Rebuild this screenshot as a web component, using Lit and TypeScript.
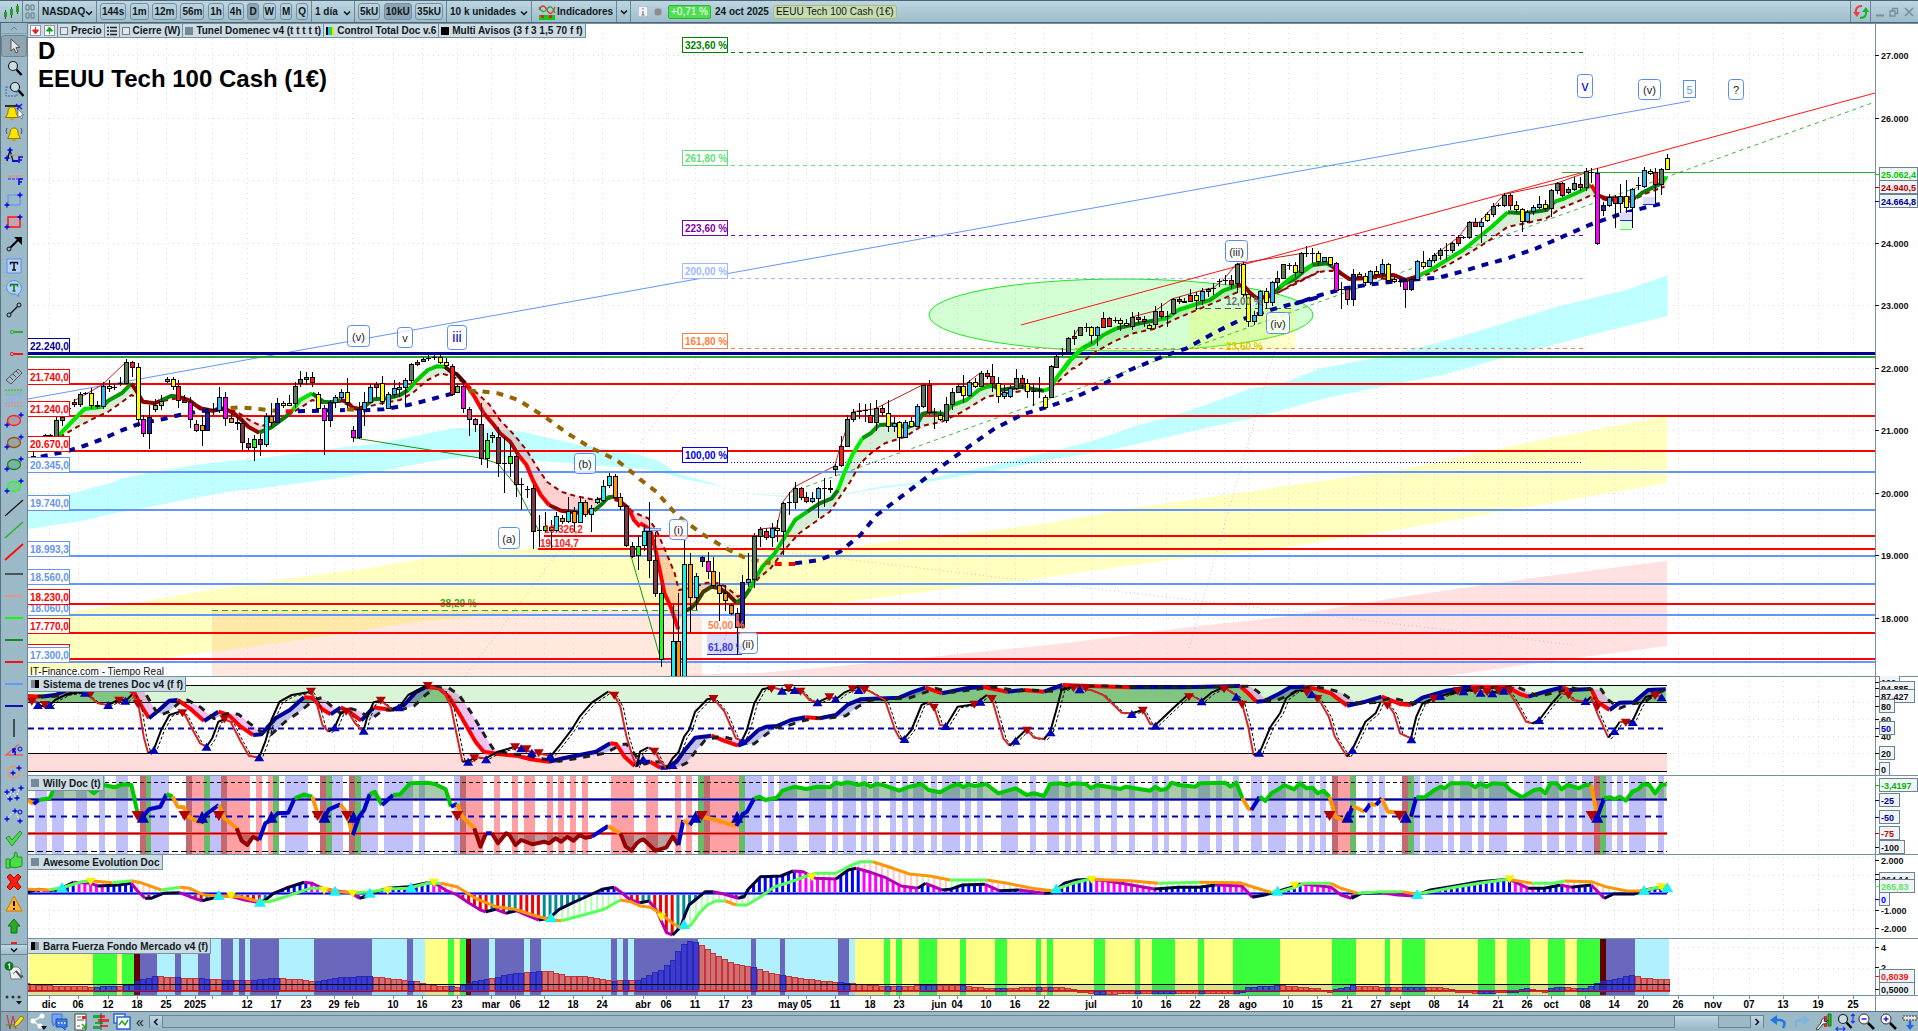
import { LitElement, html, svg, css } from "lit";
import { customElement } from "lit/decorators.js";

type P = [number, number];
type Block = { x: number; y: number; kx: number; ky: number };

/* Series are stored in block-local fixed-point units; a block gives origin and resolution. */
const A: Block = { x: 0, y: 340, kx: 2.45, ky: 3 };
const B: Block = { x: 640, y: 340, kx: 2.45, ky: 3 };
const C: Block = { x: 880, y: 220, kx: 3, ky: 3 };
const D: Block = { x: 1280, y: 60, kx: 2.458, ky: 3 };
const E: Block = { x: 0, y: 670, kx: 2.45, ky: 3 };
const F: Block = { x: 640, y: 670, kx: 2.45, ky: 3 };
const G: Block = { x: 1280, y: 670, kx: 2.458, ky: 3 };

const at = (b: Block, s: string): P[] =>
  s.trim().split(/\s+/).map((t) => {
    const [x, y] = t.split(",").map(Number);
    return [b.x + x / b.kx, b.y + y / b.ky] as P;
  });
const join = (...parts: [Block, string][]): P[] => parts.flatMap(([b, s]) => at(b, s));
const str = (p: P[]) => p.map(([x, y]) => `${x.toFixed(1)},${y.toFixed(1)}`).join(" ");
const barX = (i: number) => 33 + 5.815 * i;
const LAST = 1667;

function valueAt(curve: P[], x: number): number {
  if (x <= curve[0][0]) return curve[0][1];
  for (let i = 1; i < curve.length; i++) {
    if (x <= curve[i][0]) {
      const [x0, y0] = curve[i - 1];
      const [x1, y1] = curve[i];
      return x1 === x0 ? y1 : y0 + ((y1 - y0) * (x - x0)) / (x1 - x0);
    }
  }
  return curve[curve.length - 1][1];
}

const BODY: Record<string, string> = {
  G: "#5b7a5b", r: "#ff1a1a", y: "#ffff00", m: "#ff00ff", N: "#1f1fb0", b: "#2fb8f5",
  c: "#19f0f5", o: "#ff960a", l: "#1eff1e", h: "#7fc04a", w: "#7d3a46", p: "#d04a90", k: "#000",
};

/* colour, high, open/close top, open/close bottom, low */
const CANDLES: [Block, number, string][] = [
  [A, 0, `k 337 349 349 349;-;k 283 286 286 290;k 282 286 286 290;G 232 240 289 289;G 230 232 241 258;k 195 205 205 212;r 178 186 193 200;G 157 163 191 200;k 155 160 160 165;y 145 160 194 207;y 182 194 199 206;b 125 137 199 207;y 120 137 143 155;k 130 140 140 150;k 112 128 128 138;G 58 67 128 130;r 63 67 82 110;y 70 82 238 262;m 225 238 280 290;N 195 230 280 327;h 178 194 207 215;h 165 182 194 210;b 110 118 124 130;y 112 118 138 150;r 120 138 181 205;r 165 181 187 190;m 172 187 238 265;p 240 253 270 277;o 225 254 271 317;N 205 216 271 273;k 190 206 212 225;b 140 172 211 218;m 155 172 234 258;o 222 235 246 250;p 232 246 250 270;w 235 250 307 330;w 295 310 322 330;l 285 296 322 362;w 283 296 313 347;c 220 229 313 320;o 190 229 247 260;N 175 190 247 250;y 182 188 195 203;y 165 188 195 198;G 125 137 188 203;G 93 118 130 142;G 97 112 118 135;r 96 112 127 140;y 155 161 205 210;m 195 205 241 344;N 180 187 241 262;b 165 172 187 205;b 148 157 172 180;y 115 157 187 205;m 258 270 291 305;N 185 207 291 297;b 155 187 207 258;b 132 142 187 190;r 125 132 142 175;y 108 130 184 195;b 155 163 205 208;b 120 145 163 175;b 125 142 148 170;b 115 121 142 197;G 68 73 121 130;r 60 65 72 78;G 50 58 62 66;k 45 55 55 62;k 45 52 52 60;y 45 52 67 72;y 55 67 75 80;r 72 77 163 168;h 130 139 155 160;m 130 139 205 218;p 200 206 238 288;p 235 238 253 275;w 190 253 355 375;l 280 300 355 385;l 275 286 292 310;w 260 292 370 412;k 290 370 370 458;l 310 349 370 410;w 345 349 432 470;k 415 432 432 510;k 437 446 446 475;w 436 445 574 628;k 525 570 572 620;l 515 559 571 575;l 540 560 571 625;c 515 529 571 575;o 525 533 544 552;c 470 513 543 550;o 500 514 547 575;c 475 487 547 550;o 480 487 523 530;c 495 503 523 575;c 472 478 486 492;c 420 437 480 485;c 400 409 436 443;o 403 409 472 475;o 460 472 498 510;w 495 499 615 620;w 605 617 647 655;l 585 617 645 690`],
  [B, 105, `c 555 573 616 632;w 487 573 660 715;w 575 660 760 770;l 735 760 957 980;-;c 795 903 1040 1040;o 760 903 1040 1040;c 600 673 1040 1040;o 640 673 772 878;c 700 708 772 810;N 647 651 664 680;m 635 664 692 717;o 650 692 735 745;o 695 735 760 842;o 735 760 781 812;o 790 795 819 825;p 805 819 862 945;N 705 727 862 862;b 640 716 727 740;G 580 589 716 745;G 560 567 589 622;r 565 573 592 600;b 550 564 592 620;y 540 563 571 605;G 485 488 572 645;k 455 486 486 525;G 427 443 485 508;r 440 445 470 480;r 455 470 482 490;b 455 475 482 490;b 440 445 475 535;k 415 443 443 500;y 420 443 448 460;G 372 378 388 408;r 288 319 376 380;G 225 236 319 322;G 208 217 236 245;k 190 212 212 238;k 192 211 211 245;r 190 225 247 250;G 180 205 247 273;r 195 205 217 230;y 180 218 257 275;b 230 248 257 275;y 242 247 292 330;b 240 245 291 295;y 230 243 257 262;b 192 199 257 260;G 128 135 199 205;r 120 135 217 225;k 205 217 223 268;y 210 225 238 242;G 170 193 239 250;G 145 155 193 210;G 130 139 155 160;y 105 139 166 190;b 120 127 166 170;y 115 125 139 143;G 93 100 139 142;r 90 100 107 118;r 72 107 128 155;y 110 128 169 188;b 135 155 169 178;b 135 145 168 175;G 87 115 145 150;r 105 115 130 148;y 118 130 152 175;k 130 152 152 198;k 110 150 150 175;y 165 170 202 205;G 75 79 170 175`],
  [C, 176, `G 405 408 440 445;k 385 395 398 408;G 352 355 395 398;r 330 348 355 375;G 320 322 344 346;k 310 322 322 335;y 318 322 346 372;b 317 322 346 377;r 277 295 322 325;r 290 295 317 322;k 292 301 301 310;y 295 300 310 333;y 298 310 316 320;G 277 291 317 330;r 275 290 297 313;r 288 297 303 320;y 313 314 325 328;G 257 273 313 328;r 250 273 287 298;k 273 287 287 320;G 233 236 280 285;r 230 236 243 252;r 235 242 245 250;r 207 226 242 247;y 217 226 241 270;b 205 214 241 255;G 203 206 214 232;k 190 205 205 225;k 178 182 182 200;k 165 180 182 195;r 165 180 191 206;G 130 132 190 220;y 122 132 223 230;y 222 223 304 320;b 272 285 303 315;b 210 214 285 287;y 203 214 247 268;b 182 187 247 257;G 152 173 187 205;G 131 133 173 176;k 130 135 135 150;y 127 136 155 170;G 95 100 155 163;k 77 100 100 110;k 85 100 100 130;y 93 100 122 138`],
  [D, 222, `b 590 592 602 605;y 592 592 612 620;m 605 610 689 690;k 665 688 688 746;p 685 688 716 735;N 628 643 716 738;y 637 641 648 652;y 640 648 666 677;b 630 633 665 675;y 618 633 641 652;b 598 612 640 658;y 608 612 661 668;y 650 658 664 670;k 650 662 665 680;m 655 664 686 743;N 650 656 686 692;b 600 604 658 660;y 573 605 617 628;b 593 601 617 622;G 578 586 601 610;G 565 570 586 600;k 548 571 571 600;G 545 550 571 580;r 525 531 550 558;k 528 532 532 538;G 483 487 532 538;r 475 487 499 502;b 475 487 499 550;y 455 463 479 487;G 430 437 463 470;k 430 436 436 440;G 400 405 436 440;r 400 405 436 450;y 422 436 448 460;y 445 448 482 515;b 450 455 482 490;b 436 441 454 465;b 408 433 441 447;y 420 433 445 452;G 388 391 445 472;G 366 370 391 402;r 366 370 406 412;G 380 386 397 402;G 352 370 386 392;r 352 371 382 392;G 323 334 382 392;k 325 337 337 370;m 325 338 548 555;N 427 436 451 467;b 402 412 436 442;r 405 412 430 503;b 372 409 430 460;y 360 409 442 460;b 385 388 442 503;k 350 376 376 390;b 322 331 377 385;y 328 332 338 345;r 325 336 373 430;G 325 328 373 405;y 283 295 328 330`],
];

const GR = "#00c800", DG = "#0a7a0a", DR = "#930000", RD = "#ff0000";
const FAST: [Block, string, string][] = [
  [A, "#00e400", "145,285 180,240 207,207 251,200"],
  [A, "#009c00", "251,200 265,182 300,158 322,130"],
  [A, DR, "322,130 330,145 350,185 379,190 393,182"],
  [A, DG, "393,182 420,167 443,172"],
  [A, DR, "443,172 465,182 490,205 521,212 550,205 575,222 592,240 610,262 635,278"],
  [A, DG, "635,278 665,262 700,230 715,214"],
  [A, "#00e400", "715,214 735,180 765,160"],
  [A, DG, "765,160 792,185 810,187 834,180"],
  [A, DR, "834,180 850,185 864,203 878,207 892,200"],
  [A, DG, "892,200 915,178 949,175 980,165 1000,150"],
  [A, GR, "1000,150 1020,122 1048,90 1070,79 1090,80"],
  [A, "#500000", "1090,80 1105,95 1119,102 1140,130"],
  [A, RD, "1140,130 1160,165 1185,220"],
  [A, "#b80000", "1185,220 1210,255 1225,280 1250,305 1270,345"],
  [A, RD, "1270,345 1290,375 1305,420 1325,465 1345,495"],
  [A, DR, "1345,495 1375,512 1420,518 1455,512"],
  [A, DG, "1455,512 1475,492 1490,472 1505,470"],
  [A, DR, "1505,470 1525,490 1540,505"],
  [A, RD, "1540,505 1553,540 1568,560"],
  [B, RD, "0,550 15,560 25,570 40,640 60,760 75,800 94,868"],
  [B, "#3c3c00", "106,815 125,805 140,785 155,755 175,740 195,745"],
  [B, "#5a1400", "195,745 215,762 236,788"],
  [B, DG, "236,788 255,772 270,745"],
  [B, GR, "270,745 285,710 300,680 330,640 350,600 380,540 410,515"],
  [B, DG, "410,515 440,490 470,475 485,450"],
  [B, "#00f000", "485,450 500,400 520,345 545,295"],
  [B, "#009c00", "545,295 565,280 585,255"],
  [B, DG, "585,255 620,253 655,262 680,250 692,222 706,217 745,222"],
  [B, GR, "745,222 765,195 800,180 830,150 850,140 865,137"],
  [B, "#0a5a0a", "865,137 885,150 935,140 965,148 990,152"],
  [B, "#00e400", "990,152 1005,145 1020,115 1050,65 1080,30 1110,5"],
  [C, "#00e400", "550,450 575,415 610,382"],
  [C, GR, "610,382 640,370 670,345 710,325"],
  [C, DG, "710,325 780,310 830,300"],
  [C, "#00d400", "830,300 860,295 895,270 950,252"],
  [C, "#00b400", "950,252 990,240 1030,212 1069,198"],
  [C, DR, "1069,198 1090,195 1110,218 1130,235 1165,230 1185,215"],
  [C, DG, "1185,215 1215,190 1240,180 1270,155"],
  [C, GR, "1270,155 1300,133 1320,132"],
  [D, "#00d400", "0,682 20,660 50,635 80,615"],
  [D, DG, "80,615 115,610 130,620"],
  [D, DR, "130,620 150,640 170,657 210,655 240,648 280,645 310,660 335,650"],
  [D, "#00d400", "335,650 370,630 410,600 450,570 480,540 520,500 560,457"],
  [D, DG, "560,457 600,460 655,450 675,425"],
  [D, GR, "675,425 700,415 745,390 765,375"],
  [D, RD, "765,375 780,405"],
  [D, DR, "780,405 800,415 850,415 875,413"],
  [D, DG, "875,413 890,398 920,380 940,368"],
  [D, "#00e400", "940,368 950,350"],
];
const fastCurve: P[] = FAST.flatMap(([b, , s]) => at(b, s));
const slowCurve: P[] = join(
  [A, "145,287 155,285 190,260 230,235 265,215 300,185 322,165 345,180 375,190 420,178 450,172 475,192 520,215 550,205 580,215 610,240 640,258 665,250 700,230 740,200 765,180 792,190 834,185 870,203 900,200 935,190 980,180 1010,160 1048,120 1080,100 1110,110 1140,130 1165,155 1200,195 1225,240 1260,285 1290,330 1315,380 1340,425 1375,455 1410,468 1450,478 1490,475 1520,485 1550,515"],
  [B, "0,525 20,535 40,570 65,640 85,700 95,750 120,745 165,728 195,730 215,745 240,770 265,755 290,715 320,685 350,635 390,580 430,545 465,515 490,470 515,425 540,370 570,335 600,310 650,290 690,258 740,245 790,215 850,170 900,160 950,150 990,152 1020,130 1060,85"],
  [C, "585,445 640,400 700,365 760,340 830,325 880,300 950,270 1010,245 1069,218 1100,225 1160,230 1200,215 1250,190 1315,155"],
  [D, "0,695 40,665 100,635 130,632 170,655 240,655 310,662 370,640 420,610 470,575 510,545 560,500 610,488 655,475 690,445 740,420 765,405 800,420 860,425 900,400 945,380"],
);

const NV = "#000096", BR = "#966400";
const LONG: [string, P[]][] = [
  [NV, at(A, "100,350 160,335 205,318 245,300 300,270 345,250 400,237 440,225 500,212 560,205")],
  [BR, at(A, "565,204 590,202 640,208 690,214")],
  [RD, at(A, "700,214 722,214")],
  [NV, at(A, "730,214 845,210")],
  [BR, at(A, "850,208 885,210")],
  [NV, at(A, "890,211 940,208 1000,195 1050,180 1110,160 1125,155")],
  [BR, join([A, "1148,152 1170,153 1220,160 1270,180 1340,235 1390,280 1450,325 1510,360 1560,408"], [B, "0,418 40,455 90,525 150,580 210,625 260,655 320,670"])],
  [RD, at(B, "330,672 380,672")],
  [NV, join([B, "380,670 440,660 490,635 540,585 580,525 640,470 720,395 800,325 870,265 940,222 1000,200 1060,175 1120,142 1200,90 1290,45"], [C, "920,385 1000,340 1080,300 1170,270 1250,248 1320,230"], [D, "40,730 100,705 160,685 230,672 310,660 390,653 440,637 500,615 560,595 630,565 700,527 760,495 830,465 900,442 950,427"])],
];

const area = (top: P[], bottom: P[]) => str([...top, ...[...bottom].reverse()]);
const CYAN = area(
  join([A, "68,482 148,463 190,457 220,445 270,430 300,415 375,397 450,380 520,368 620,357 700,345 770,332 850,320 920,312 1010,290 1110,265 1190,265 1280,275 1400,310 1560,343"], [B, "0,345 50,365 90,400 150,420 205,440 260,460 360,468 490,465 580,442 660,430 730,410 850,380 950,350 1030,328 1130,295 1220,255 1300,230 1420,180 1500,145 1568,132"], [D, "100,925 230,895 400,845 550,790 680,740 850,690 953,645"]),
  join([A, "68,568 150,552 200,543 280,520 370,500 450,480 560,455 640,445 740,428 850,410 970,385 1050,365 1130,352 1210,350 1350,365 1560,386"], [B, "0,385 50,395 100,415 160,430 220,445 270,462 360,472 490,467 580,447 660,435 760,415 900,385 1000,360 1140,333 1280,295 1400,260 1500,235 1568,212"], [D, "110,1015 250,980 400,945 530,900 650,862 780,820 953,768"]),
);
const YELLOW = area(
  [...join([A, "68,845 110,830 190,812 350,785 470,758 600,735 740,710 900,685 1090,645 1300,625 1560,618"], [B, "0,630 200,630 500,625 600,605 800,580 1000,550 1200,505 1350,480 1568,440"]), [1400, 470], [1540, 440], [1667, 416]],
  [...join([A, "68,1000 200,985 420,950 520,935 700,905 860,875 1000,850 1200,825 1400,810 1560,801"], [B, "0,800 300,798 500,787 700,755 950,720 1150,685 1300,660 1568,625"]), [1400, 529], [1540, 505], [1667, 483]],
);
const PINK = area(
  [...at(B, "0,1008 300,998 560,970 800,940 1000,915 1200,885 1350,860 1568,832"), [1400, 597], [1540, 577], [1667, 561]],
  [[640, 684], [1280, 700], [1440, 677], [1560, 660], [1667, 646]],
);

const LEVELS: [string, number, string, string][] = [
  ["21.740,0", 384, "#ff0000", "#ff0000"], ["21.240,0", 416, "#ff0000", "#ff0000"],
  ["20.670,0", 451, "#ff0000", "#ff0000"], ["20.345,0", 472, "#6495ff", "#6495ed"],
  ["19.740,0", 510, "#6495ff", "#6495ed"], ["18.993,3", 556, "#6495ff", "#6495ed"],
  ["18.560,0", 584, "#6495ff", "#6495ed"], ["18.060,0", 615, "#6495ff", "#6495ed"],
  ["18.230,0", 604, "#ff0000", "#ff0000"], ["17.770,0", 633, "#ff0000", "#ff0000"],
  ["", 659, "#ff0000", "#ff0000"], ["17.300,0", 662, "#6495ff", "#6495ed"],
];

const FIBS: [string, number, string, string][] = [
  ["323,60 %", 52, "#008000", "4 4"], ["261,80 %", 165, "#5fe07a", "4 4"],
  ["223,60 %", 235, "#7f00a8", "4 4"], ["200,00 %", 278, "#9fb8ff", "4 4"],
  ["161,80 %", 348, "#ff7f40", "4 4"], ["100,00 %", 462, "#0000e0", "1 2"],
];

const BADGES: [number, number, number, number, string, string, number][] = [
  [347, 325, 22, 21, "(v)", "#222", 11], [397, 327, 15, 20, "v", "#222", 11],
  [447, 325, 19, 24, "iii", "#0000c8", 14], [498, 527, 21, 21, "(a)", "#222", 11],
  [574, 453, 21, 20, "(b)", "#222", 11], [669, 519, 18, 20, "(i)", "#222", 11],
  [738, 632, 19, 21, "(ii)", "#222", 11], [1225, 240, 22, 21, "(iii)", "#222", 11],
  [1266, 312, 23, 21, "(iv)", "#222", 11], [1577, 74, 15, 23, "v", "#0000ff", 14],
  [1638, 79, 22, 20, "(v)", "#222", 11], [1683, 80, 12, 17, "5", "#6495ed", 11],
  [1728, 79, 15, 20, "?", "#222", 11],
];

const DATES: [number, string][] = [
  [49, "dic"], [78, "06"], [108, "12"], [137, "18"], [166, "25"], [195, "2025"], [212, ""], [247, "12"],
  [276, "17"], [306, "23"], [334, "29"], [352, "feb"], [393, "10"], [422, "16"], [457, "23"], [491, "mar"],
  [515, "06"], [544, "12"], [573, "18"], [602, "24"], [643, "abr"], [666, "06"], [695, "11"], [724, "17"],
  [747, "23"], [788, "may"], [806, "05"], [835, "11"], [870, "18"], [899, "23"], [939, "jun"], [957, "04"],
  [986, "10"], [1015, "16"], [1044, "22"], [1091, "jul"], [1137, "10"], [1166, "16"], [1195, "22"],
  [1224, "28"], [1248, "ago"], [1288, "10"], [1317, "15"], [1347, "21"], [1376, "27"], [1400, "sept"],
  [1434, "08"], [1463, "14"], [1498, "21"], [1527, "26"], [1551, "oct"], [1585, "08"], [1614, "14"],
  [1643, "20"], [1678, "26"], [1713, "nov"], [1749, "07"], [1783, "13"], [1818, "19"], [1853, "25"],
];

const gridLines = (y0: number, y1: number, rows: number[]) => svg`
  <g stroke="#dcdcdc" stroke-dasharray="1 4" shape-rendering="crispEdges">
    ${DATES.map(([x]) => svg`<line x1=${x + 0.5} x2=${x + 0.5} y1=${y0} y2=${y1} />`)}
    ${rows.map((y) => svg`<line x1="28" x2="1875" y1=${y + 0.5} y2=${y + 0.5} />`)}
  </g>`;

const poly = (p: P[], color: string, w = 1, dash = "") =>
  svg`<polyline points=${str(p)} fill="none" stroke=${color} stroke-width=${w} stroke-dasharray=${dash || "none"} stroke-linejoin="round" />`;

/* Splits a curve into runs and paints each run with the colour its slope asks for. */
function bySlope(p: P[], pick: (a: P, b: P) => string, w: number) {
  const runs: [string, P[]][] = [];
  for (let i = 1; i < p.length; i++) {
    const c = pick(p[i - 1], p[i]);
    const last = runs[runs.length - 1];
    if (last && last[0] === c) last[1].push(p[i]);
    else runs.push([c, [p[i - 1], p[i]]]);
  }
  return runs.map(([c, q]) => poly(q, c, w));
}

function bandFill(a: P[], b: P[], from: number, to: number, over: string, under: string) {
  const out = [];
  for (let x = from; x < to; x += 5.815) {
    const n = Math.min(to, x + 5.815);
    const [a0, a1, b0, b1] = [valueAt(a, x), valueAt(a, n), valueAt(b, x), valueAt(b, n)];
    out.push(svg`<polygon points=${str([[x, a0], [n, a1], [n, b1], [x, b0]])} fill=${a0 + a1 < b0 + b1 ? over : under} />`);
  }
  return out;
}

const triangle = ([x, y]: P, up: boolean, color: string, w = 5, h = 5) =>
  svg`<polygon points=${up ? `${x - w},${y + h} ${x + w},${y + h} ${x},${y - h}` : `${x - w},${y - h} ${x + w},${y - h} ${x},${y + h}`} fill=${color} />`;

function candles() {
  return CANDLES.map(([b, start, text]) =>
    text.split(";").map((row, k) => {
      const [c, ...v] = row.trim().split(" ");
      if (c === "-") return null;
      const x = Math.round(barX(start + k));
      const [hi, top, bot, lo] = v.map((n) => Math.round(b.y + Number(n) / b.ky));
      return svg`
        <rect x=${x} y=${hi} width="1" height=${Math.max(1, lo - hi)} fill="#000" />
        ${c === "k" || bot - top < 1
          ? svg`<rect x=${x - 2} y=${top} width="5" height="1" fill="#000" />`
          : svg`<rect x=${x - 1.5} y=${top + 0.5} width="4" height=${Math.max(1, bot - top)} fill=${BODY[c]} stroke="#000" />`}`;
    }));
}

const label = (x: number, y: number, t: string, color: string, extra = "") =>
  svg`<text class="t ${extra}" x=${x} y=${y} fill=${color}>${t}</text>`;

function mainPlot() {
  return svg`
    <polygon points=${PINK} fill="#ffe1e1" />
    <polygon points=${YELLOW} fill="#ffffbf" />
    <polygon points=${CYAN} fill="#bfffff" />
    <rect x="212" y="610" width="490" height="68" fill="#ff7832" fill-opacity=".16" />
    ${gridLines(23, 676, [55, 118, 180, 243, 305, 368, 430, 493, 555, 618])}
    ${bandFill(fastCurve, slowCurve, 60, 1666, "rgba(0,150,0,.16)", "rgba(255,40,40,.22)")}
    <g stroke="#c4c4c4" stroke-dasharray="1 3">
      <line x1="465" y1="676" x2="560" y2="550" /><line x1="640" y1="443" x2="701" y2="362" />
      <line x1="681" y1="540" x2="1575" y2="645" /><line x1="1189" y1="648" x2="1275" y2="350" />
      <line x1="717" y1="675" x2="745" y2="550" />
    </g>
    <ellipse cx="1121" cy="315" rx="192" ry="36" fill="#00ff00" fill-opacity=".17" stroke="#1ee61e" stroke-width="1" />
    <rect x="1189" y="309" width="106" height="41" fill="#ffff00" fill-opacity=".2" />
    <line x1="1195" x2="1295" y1="308.5" y2="308.5" stroke="#555" stroke-dasharray="6 4" />

    ${FIBS.map(([, y, c, d]) => svg`<line x1="731" x2="1583" y1=${y + 0.5} y2=${y + 0.5} stroke=${c} stroke-dasharray=${d} shape-rendering="crispEdges" />`)}
    <line x1="212" x2="702" y1="610.5" y2="610.5" stroke="#2aaa2a" stroke-dasharray="6 4" />
    ${label(440, 607, "38,20 %", "#2aaa2a")}

    <line x1="28" y1="399" x2="1690" y2="101" stroke="#6495ff" />
    <line x1="1021" y1="325" x2="1875" y2="93" stroke="#ff1414" />
    <line x1="791" y1="492" x2="1875" y2="102" stroke="#3cb43c" stroke-dasharray="4 4" />
    <line x1="1562" y1="172.5" x2="1875" y2="172.5" stroke="#2aaa2a" />

    ${poly(at(A, "180,183 250,135 308,67"), "#c81e1e")}
    ${poly(at(B, "293,567 335,562 349,487 379,440 477,378 491,319 520,217 535,212 575,207 692,135 706,135 800,130 834,98"), "#c81e1e")}
    ${poly(at(C, "580,350 598,322"), "#c81e1e")}
    ${poly(at(C, "755,291 825,273 875,237 980,207 1000,204 1034,175 1069,132 1261,101"), "#c81e1e")}
    ${poly(at(D, "375,590 440,530 466,487 490,487 551,403 680,370 751,338"), "#c81e1e")}
    ${poly(at(A, "864,293 1180,355 1219,370 1263,435 1319,570"), "#149614")}
    ${poly([[631, 556], [640, 587], [660, 657]], "#149614")}

    <g shape-rendering="crispEdges">
      ${LEVELS.map(([, y, c]) => svg`<rect x="28" y=${y - 1} width="1847" height="2" fill=${c} />`)}
      <rect x="28" y="352" width="1847" height="3" fill="#000096" />
      <rect x="28" y="356" width="1847" height="2" fill="#2fa02f" />
      <rect x="544" y="535" width="1331" height="2" fill="#ff0000" />
      <rect x="538" y="548" width="1337" height="2" fill="#ff0000" />
    </g>
    ${poly(slowCurve, "#960000", 2, "5 4")}
    ${FAST.map(([b, c, s]) => poly(at(b, s), c, 4))}
    ${LONG.map(([c, p]) => poly(p, c, 4, "7 7"))}

    <rect x="1620" y="212" width="12" height="8" fill="#dcdcff" /><rect x="1620" y="220" width="12" height="10" fill="#dcffdc" />
    <line x1="1620" x2="1632" y1="220.5" y2="220.5" stroke="#2828dc" /><line x1="1620" x2="1632" y1="229.5" y2="229.5" stroke="#64e664" />
    <rect x="1643" y="197" width="12" height="7" fill="#dcdcff" /><line x1="1643" x2="1655" y1="204.5" y2="204.5" stroke="#2828dc" />
    <rect x="643.5" y="528.5" width="17" height="2" fill="#dcdcff" stroke="#6495ff" />
    <rect x="707" y="634" width="35" height="20" fill="#3c3ce6" fill-opacity=".18" />
    <line x1="707" x2="742" y1="654.5" y2="654.5" stroke="#2828dc" />
    <g shape-rendering="crispEdges">${candles()}</g>

    ${label(544, 533, "19.326,2", "#ff1e1e")}${label(540, 547, "19.104,7", "#ff1e1e")}
    ${label(708, 629, "50,00 %", "#ff8250")}${label(708, 651, "61,80 %", "#3c3cdc")}
    ${label(1226, 305, "12,00 %", "#6e6e6e")}${label(1226, 350, "23,60 %", "#dcc800")}

    ${FIBS.map(([t, y, c]) => svg`<rect x="682.5" y=${y - 14.5} width="45" height="15" fill="#fff" stroke=${c} />${label(685, y - 3, t, c)}`)}
    ${LEVELS.map(([t, y, , c]) => svg`<rect x="27.5" y=${y - 14.5} width="42" height="15" fill="#fff" stroke=${c} />${t ? label(30, y - 3, t, c) : null}`)}
    <rect x="27.5" y="338.5" width="42" height="14" fill="#fff" stroke="#000096" />${label(30, 350, "22.240,0", "#000096")}
    ${BADGES.map(([x, y, w, h, t, c, s]) => svg`
      <rect x=${x + 0.5} y=${y + 0.5} width=${w} height=${h} rx=${t === "5" ? 0 : 3} fill="#fff" fill-opacity=".75" stroke="#5a8cf0" />
      <text class="badge" font-size=${s} x=${x + w / 2 + 0.5} y=${y + h / 2 + 5} fill=${c}>${t}</text>`)}
    <text class="big" x="38" y="59">D</text>
    <text class="big" x="38" y="87">EEUU Tech 100 Cash (1€)</text>
    <text class="foot" x="30" y="675">IT-Finance.com - Tiempo Real</text>`;
}

const trainFast = join(
  [E, "68,80 85,95 100,108 120,108 135,90 165,72 205,65 220,80 240,100 265,105 290,90 310,90 325,72 340,110 352,200 363,250 377,238 395,180 415,135 440,125 452,132 470,175 490,220 506,230 520,205 535,155 550,148 565,155 590,215 610,258 635,262 650,215 665,150 685,95 715,75 762,65 775,95 790,165 805,185 820,172 835,130 850,120 870,160 890,185 900,140 915,97 933,92 960,118 977,112 1000,75 1045,47 1085,60 1105,110 1120,200 1133,275 1150,272 1165,262 1190,265 1220,245 1262,230 1300,245 1320,250 1350,258 1375,220 1400,180 1420,140 1450,98 1490,65 1505,75 1520,110 1535,200 1550,260 1560,290"],
  [F, "0,245 20,232 35,240 50,275 65,295 80,265 95,245 108,200 120,180 135,125 165,88 180,85 207,125 235,205 250,212 262,180 280,100 300,58 322,52 350,60 380,60 395,62 415,90 435,97 465,80 480,88 500,68 535,50 560,62 600,90 625,180 637,207 648,205 665,180 690,105 705,97 720,110 735,165 750,167 778,110 820,103 850,75 862,85 890,205 905,227 920,210 947,178 965,203 990,207 1005,185 1020,120 1033,60 1062,50 1105,60 1135,75 1180,128 1205,130 1232,120 1250,162 1263,165 1310,110 1345,72 1376,93 1400,68 1430,52 1462,77 1475,100 1490,170 1503,255 1518,248 1545,170"],
  [G, "0,130 15,85 40,62 65,60 92,80 120,140 135,200 165,260 178,238 210,155 235,130 248,95 263,100 280,130 295,190 322,205 335,140 350,100 378,85 437,62 480,60 515,68 560,60 580,100 605,155 620,160 637,150 665,105 690,70 708,73 720,90 752,95 765,80 780,130 807,203 822,180 835,155 852,157 867,152 885,105 900,80 922,75 937,80"],
);
const trainSlow = join(
  [E, "68,78 100,80 135,75 165,60 310,55 330,70 345,105 365,145 390,120 415,92 435,90 465,115 500,153 535,125 560,135 590,170 620,195 640,193 675,145 710,120 745,82 765,83 790,118 810,133 835,112 855,125 885,152 915,112 960,120 990,105 1020,65 1045,50 1075,55 1100,80 1130,140 1165,215 1185,245 1220,252 1270,258 1300,268 1345,275 1380,265 1460,245 1495,220 1510,222 1530,260 1555,288"],
  [F, "0,275 25,275 50,293 65,293 90,275 110,240 135,203 175,197 205,212 240,227 255,220 290,180 310,170 335,168 370,150 405,142 440,145 480,135 510,103 540,88 635,83 670,65 700,53 740,70 800,55 840,50 900,65 940,60 990,65 1035,45 1100,48 1200,52 1330,52 1385,50 1470,48 1490,70 1510,95 1530,93"],
  [G, "0,70 25,52 60,50 90,57 125,70 165,107 210,95 250,80 295,102 322,105 350,83 410,62 470,50 560,52 590,72 610,80 660,62 695,52 710,60 765,57 780,95 810,120 835,98 870,97 905,60 948,58"],
);
const trainLag = trainSlow.map(([x, y], i): P => [Math.min(LAST, x + 10), (y * 4 + (trainSlow[i - 1] ?? trainSlow[i])[1]) / 5]);
const DOWN = join(
  [E, "78,95 110,105 222,72 292,92 337,102 447,130 550,148 762,65 848,125 933,92 1048,48 1162,265 1262,232 1290,238 1320,250 1505,77"],
  [F, "35,245 180,87 322,57 364,55 393,65 464,82 520,57 550,60 720,113 819,104 862,87 948,182 1062,55 1092,55 1232,122 1345,82 1431,58 1475,104"],
  [G, "66,68 92,87 264,107 378,87 437,64 480,63 509,67 537,62 564,62 709,76 780,112 850,158 922,78"],
);
const UP = join(
  [E, "93,105 122,105 208,68 265,105 307,92 377,240 506,230 635,262 820,172 891,182 977,112 1147,275 1191,268 1277,235 1303,248 1348,258"],
  [F, "8,268 80,285 252,212 348,62 379,60 435,97 479,87 536,60 648,207 749,168 834,95 920,212 1006,187 1077,58 1205,132 1263,167 1376,94 1461,80 1517,248"],
  [G, "78,72 178,240 323,208 394,78 451,64 493,68 522,70 550,62 637,150 751,93 822,183 867,156 938,82"],
);

function trainPlot() {
  const cap = trainSlow.map(([x, y]): P => [x, Math.min(y, 702)]);
  const floor = trainSlow.map(([x]): P => [x, 702]);
  return svg`
    ${gridLines(676, 775, [702, 719, 736, 753])}
    <rect x="28" y="685" width="1639" height="17" fill="#d9f4d6" /><rect x="28" y="754" width="1639" height="17" fill="#ffdcdc" />
    <polygon points=${area(cap, floor)} fill="#0a820a" fill-opacity=".42" />
    ${bandFill(trainSlow, trainLag, 28, LAST, "rgba(80,80,200,.35)", "rgba(215,80,215,.35)")}
    ${[685, 702, 753, 771].map((y) => svg`<rect x="28" y=${y} width="1639" height="1" fill="#000" />`)}
    <line x1="28" x2="1663" y1="728.5" y2="728.5" stroke="#0000b4" stroke-width="2" stroke-dasharray="6 4" />
    ${bySlope(trainSlow, (a, b) => (b[1] <= a[1] ? "#00009b" : "#ff0000"), 4)}
    ${poly(trainLag, "#1e1e1e", 3, "7 7")}
    ${poly(trainFast.map(([x, y]): P => [Math.min(LAST, x + 3), y + 1]), "#000", 1, "3 2")}
    ${bySlope(trainFast, (a, b) => (b[1] <= a[1] ? "#000" : "#d22828"), 2)}
    ${DOWN.map((p) => triangle(p, false, "#b40000", 5, 4))}${UP.map((p) => triangle(p, true, "#0000b4", 5, 4))}`;
}

const STRIPES: [Block, string, string][] = [
  [E, "#c0c0fa", "86-115 128-157 186-213 243-257 285-313 370-413 515-542 698-755 813-840 884-926 941-1012 1027-1041 1112-1127"],
  [E, "#c26a70", "343-358 456-470 541-556 784-799 855-869 1127-1142"],
  [E, "#68bc68", "358-370 500-514 670-684 799-813 869-884"],
  [E, "#ffa0a4", "470-500 556-612 627-642 657-670 1142-1183 1210-1225 1254-1268 1284-1311 1340-1355 1368-1382 1396-1411 1426-1441 1497-1553"],
  [F, "#ffa0a4", "15-44 86-100 113-127 171-243"], [F, "#68bc68", "142-157 243-257"], [F, "#c26a70", "157-171"],
  [F, "#c0c0fa", "257-299 314-328 341-385 414-456 470-485 497-528 541-556 571-585 613-627 642-656 670-697 713-727 740-783 797-812 826-840 884-926 955-970 997-1027 1041-1055 1068-1083 1112-1127 1154-1169 1198-1212 1254-1268 1283-1297 1325-1339 1368-1396 1411-1425 1453-1467 1497-1523 1539-1568"],
  [G, "#c0c0fa", "0-15 42-57 71-86 98-113 214-228 243-257 329-344 356-400 413-428 442-472 487-501 514-558 600-644 656-686 700-730 742-772 801-815 828-842 858-900 929-944"],
  [G, "#c26a70", "128-143 300-315 772-786"], [G, "#ffa0a4", "143-172"], [G, "#68bc68", "172-187 315-329 786-801"],
];
const stripes = (list: [Block, string, string][], y: number, h: number) =>
  svg`<g shape-rendering="crispEdges">${list.map(([b, c, s]) => s.split(" ").map((r) => {
    const [x0, x1] = r.split("-").map((n) => Math.round(b.x + Number(n) / b.kx));
    return svg`<rect x=${x0} y=${y} width=${x1 - x0} height=${h} fill=${c} />`;
  }))}</g>`;

const willy = join(
  [E, "68,390 82,402 95,390 122,385 135,345 200,340 230,370 255,345 280,352 300,343 322,345 337,430 350,440 365,418 393,410 408,372 423,380 435,410 450,412 462,440 493,460 506,432 536,405 550,445 580,475 592,512 606,525 620,500 635,510 650,460 665,450 680,430 706,428 722,385 745,373 765,380 778,430 790,455 806,418 834,403 850,430 864,495 880,440 892,420 906,372 918,365 936,405 963,375 980,373 1005,340 1048,338 1065,342 1092,358 1105,410 1120,402 1133,440 1162,475 1177,530 1191,490 1205,490 1220,520 1240,490 1248,495 1263,525 1277,510 1305,523 1333,515 1345,520 1361,505 1375,515 1390,500 1405,512 1420,495 1434,503 1450,500 1475,480 1490,468 1505,480 1520,490 1533,530 1547,542 1560,520"],
  [F, "0,512 8,508 38,542 65,532 80,500 94,525 106,450 122,465 136,440 151,440 180,448 236,468 252,432 262,425 280,385 293,380 307,390 335,383 349,362 379,350 407,357 435,350 465,352 480,338 493,342 507,337 521,340 535,345 550,340 565,350 580,342 595,345 635,362 660,350 690,342 707,360 735,367 760,350 780,342 792,352 806,343 820,348 848,342 878,370 920,355 948,375 965,370 990,378 1005,342 1033,340 1048,346 1060,340 1092,342 1105,355 1120,345 1177,357 1190,350 1250,362 1263,350 1275,360 1290,357 1303,338 1320,345 1360,350 1373,340 1433,338 1447,350 1461,338 1476,385 1490,415 1498,420 1518,380 1532,393 1547,370"],
  [G, "0,355 10,345 35,358 50,340 65,355 80,353 93,370 107,362 122,380 136,440 165,455 178,408 208,425 222,402 236,405 250,385 265,425 300,428 322,440 335,382 355,382 380,360 395,350 405,355 420,340 465,340 480,352 493,340 507,350 522,340 553,342 565,360 595,382 625,360 640,357 652,370 665,340 680,340 692,358 707,345 735,355 750,345 765,345 780,440 797,385 812,382 822,388 835,380 850,392 866,365 880,358 893,342 908,345 922,370 937,345 950,343"],
);

function willyPlot() {
  const high = willy.map(([x, y]): P => [x, Math.min(y, 799)]);
  const low = willy.map(([x, y]): P => [x, Math.max(y, 834)]);
  const pick = (a: P, b: P) => {
    const m = (a[1] + b[1]) / 2;
    if (m < 800) return "#00c800";
    if (m > 834) return "#960000";
    return b[1] > a[1] ? "#ff960a" : "#0000c8";
  };
  return svg`
    ${gridLines(775, 854, [])}
    ${stripes(STRIPES, 776, 78)}
    <polygon points=${area(high, willy.map(([x]): P => [x, 799]))} fill="#328232" fill-opacity=".42" />
    <polygon points=${area(willy.map(([x]): P => [x, 834]), low)} fill="#5a1414" fill-opacity=".4" />
    <line x1="28" x2="1667" y1="782.5" y2="782.5" stroke="#000" stroke-dasharray="4 3" />
    <line x1="28" x2="1667" y1="851.5" y2="851.5" stroke="#000" stroke-dasharray="6 3" />
    <rect x="28" y="798" width="1639" height="3" fill="#5050c8" /><rect x="28" y="799" width="1639" height="1" fill="#000080" />
    <rect x="28" y="832" width="1639" height="3" fill="#f05050" /><rect x="28" y="833" width="1639" height="1" fill="#b40000" />
    <line x1="28" x2="1663" y1="816.5" y2="816.5" stroke="#0000b4" stroke-width="2" stroke-dasharray="6 5" />
    ${bySlope(willy, pick, 4)}
    ${join([E, "337,438 452,438 536,438 778,438 850,438 1120,438"], [F, "151,438"], [G, "122,438 294,438 766,438"]).map((p) => triangle(p, false, "#b40000", 6, 5))}
    ${join([E, "350,440 495,440 665,440 795,440 866,440"], [F, "136,440 238,440"], [G, "166,440 309,440 780,440"]).map((p) => triangle(p, true, "#0000b4", 6, 6))}`;
}

const aoFast = join(
  [E, "68,665 95,658 122,662 150,655 180,637 222,640 240,648 290,645 322,640 335,660 355,685 370,685 400,670 440,668 465,680 495,692 520,685 536,675 570,680 600,690 635,698 650,690 670,670 700,655 745,637 765,640 790,655 820,662 860,668 880,685 895,680 910,670 950,655 1000,650 1048,638 1065,640 1092,660 1120,675 1150,700 1177,720 1190,725 1215,718 1240,730 1265,722 1290,735 1320,750 1345,745 1370,718 1400,700 1440,678 1475,658 1505,652 1525,670 1545,690"],
  [F, "0,698 22,693 40,720 65,788 80,795 100,770 110,735 120,705 135,690 160,665 180,665 205,672 240,685 255,680 265,658 295,620 345,618 375,603 400,605 430,625 480,627 510,600 530,595 560,605 600,622 640,648 680,655 700,640 740,660 760,658 790,645 845,643 880,662 930,660 990,670 1010,668 1040,640 1070,630 1105,628 1140,632 1180,640 1260,657 1320,652 1370,652 1410,645 1475,648 1500,682 1530,675"],
  [G, "0,662 20,655 50,642 80,645 125,652 150,675 175,685 200,670 250,668 290,675 330,678 370,660 430,648 490,635 564,628 585,640 610,655 650,655 690,645 715,652 765,645 785,670 797,685 820,672 870,672 895,660 950,650"],
);
const aoSlow = join(
  [E, "68,658 120,660 160,650 200,635 222,632 275,638 322,632 345,638 395,660 440,652 465,655 500,675 535,678 590,680 635,695 660,695 700,680 760,655 790,655 830,665 870,668 910,665 950,657 1000,655 1048,640 1080,640 1120,650 1165,685 1215,710 1262,718 1305,735 1350,750 1375,752 1420,738 1480,718 1520,690 1545,695"],
  [F, "0,708 25,712 50,730 80,760 95,770 108,775 125,765 145,730 165,705 185,693 210,693 235,705 262,705 290,685 330,650 370,635 410,618 430,610 480,610 510,590 540,575 570,575 620,595 660,612 710,618 760,630 850,630 900,640 960,655 1010,662 1060,640 1100,628 1150,630 1200,632 1270,640 1370,637 1470,638 1500,650 1545,667"],
  [G, "0,665 30,655 60,640 125,640 150,655 190,670 250,665 300,665 335,672 370,665 430,652 490,640 560,628 620,640 670,640 700,633 765,635 800,650 850,662 890,663 920,655 950,650"],
);

function awesomePlot() {
  const zero = 893;
  const bars = [];
  for (let i = 0; i < 282; i++) {
    const x = barX(i);
    const f = valueAt(aoFast, x), s = valueAt(aoSlow, x), prev = valueAt(aoFast, x - 5.815);
    const rising = f <= prev;
    const color = f < zero ? (rising ? "#0000ff" : "#ff00ff") : rising ? "#008c8c" : "#f00000";
    bars.push(svg`<rect x=${x - 1} y=${Math.min(f, s)} width="2" height=${Math.abs(f - s)} fill=${rising ? "#b4ffb4" : "#ffc8c8"} />
      <rect x=${x - 2} y=${Math.min(f, zero)} width="3" height=${Math.abs(f - zero)} fill=${color} />`);
  }
  return svg`
    ${gridLines(854, 938, [857, 875, 910, 928])}
    ${bars}
    <rect x="28" y="892" width="1639" height="3" fill="#6e6eff" /><rect x="28" y="893" width="1639" height="1" fill="#0000c8" />
    ${bySlope(aoFast, (a, b) => (b[1] <= a[1] ? "#00003c" : "#b400b4"), 3)}
    ${bySlope(aoSlow, (a, b) => (b[1] <= a[1] ? "#5aff5a" : "#ff960a"), 3)}
    ${join([E, "222,635 566,678 794,662 864,672 950,662 1063,638"], [F, "52,742 421,622 1107,630"], [G, "36,647 564,628 937,652"]).map((p) => triangle(p, false, "#f5f500", 5, 4))}
    ${join([E, "152,652 536,675 637,695 821,662 906,668 1007,652 1350,742"], [F, "108,762 1020,655 1562,662"], [G, "337,672 895,660 952,652"]).map((p) => triangle(p, true, "#1ef0f5", 6, 5))}`;
}

const YL = "#ffff86", GN = "#3cff3c", PU = "#6a68bc", CY = "#b0f0ff", DK = "#5f0000";
const ZONES: [Block, string, string][] = [
  [E, YL, "71-228 287-299 1041-1098 1112-1127"], [E, GN, "228-287 299-328 1098-1112 1127-1142"],
  [E, DK, "328-343 1142-1154"],
  [E, PU, "343-385 429-443 485-514 541-571 586-600 612-684 769-911 997-1012 1154-1198 1213-1284 1298-1325 1497-1512 1526-1539 1553-1568"],
  [E, CY, "385-429 443-485 514-541 571-586 600-612 684-769 911-997 1012-1041 1198-1213 1284-1298 1325-1497 1512-1526 1539-1553"],
  [F, CY, "142-527"], [F, PU, "0-142 272-284 343-355 485-512"], [F, YL, "527-1453"],
  [F, GN, "598-612 627-642 684-728 784-799 870-899 970-982 997-1012 1112-1139 1213-1225 1254-1311 1367-1382 1453-1568"],
  [G, YL, "0-786"], [G, GN, "128-187 258-270 300-356 487-528 558-614 659-700 730-786"],
  [G, DK, "786-801"], [G, PU, "801-872"], [G, CY, "872-956"],
];
const force = join(
  [E, "68,940 100,945 150,948 240,950 325,945 340,932 380,918 430,922 500,925 560,930 610,930 670,924 740,928 775,934 830,922 900,917 960,925 1020,934 1060,946 1120,950 1150,938 1200,925 1250,912 1310,904 1350,904 1390,917 1450,920 1500,932 1560,930"],
  [F, "0,928 50,900 80,870 100,830 120,812 142,818 180,848 230,880 280,890 330,912 400,925 480,936 540,942 600,948 700,946 800,946 850,955 1000,950 1050,953 1080,965 1130,972 1200,969 1300,970 1470,970 1485,952"],
  [G, "0,945 100,955 120,968 135,958 180,946 300,952 400,950 440,965 500,970 570,965 610,952 650,965 670,950 750,955 790,935 868,915 900,925 956,928"],
);
const BLUE_FORCE = [...ZONES.filter(([, c]) => c === PU || c === GN || c === DK)].flatMap(([b, , s]) =>
  s.split(" ").map((r) => r.split("-").map((n) => b.x + Number(n) / b.kx)));

function forcePlot() {
  const bars = [];
  for (let i = -1; i < 282; i++) {
    const x = barX(i), y = valueAt(force, x), base = 991;
    const blue = BLUE_FORCE.some(([a, b]) => x >= a && x < b);
    bars.push(svg`<rect x=${Math.round(x) - 2.5} y=${Math.round(Math.min(y, base)) + 0.5} width="5" height=${Math.max(1, Math.round(Math.abs(y - base)))}
      fill=${blue ? "#2828dc" : "#dc3c3c"} fill-opacity=".7" stroke=${blue ? "#2828b4" : "#c83232"} stroke-width="1" />`);
  }
  return svg`
    ${gridLines(938, 995, [947, 968])}
    ${stripes(ZONES, 939, 56)}
    <rect x="28" y="985" width="1642" height="10" fill="#5064b4" fill-opacity=".2" />
    ${bars}
    <rect x="28" y="984" width="1642" height="1" fill="#000" /><rect x="28" y="990" width="1642" height="1" fill="#c81414" />`;
}

type Mark = [number, string, string?, boolean?];
const axis = (marks: Mark[]) => marks.map(([y, t, c = "#111", boxed = false]) => svg`
  <line x1="1875" x2="1879" y1=${y + 0.5} y2=${y + 0.5} stroke=${c} />
  ${boxed ? svg`<rect x="1879.5" y=${y - 6.5} width=${Math.min(38, t.length * 5 + 5)} height="13" fill="#f0f4f6" stroke="#6b8290" />` : null}
  ${label(1881, y + 4, t, c, "ax")}`);

const MAIN_AXIS: Mark[] = [
  [55, "27.000"], [118, "26.000"], [243, "24.000"], [305, "23.000"], [368, "22.000"], [430, "21.000"],
  [493, "20.000"], [555, "19.000"], [618, "18.000"],
  [174, "25.062,4", "#00c800", true], [187, "24.940,5", "#b40000", true], [201, "24.664,8", "#000096", true],
];
const TRAIN_AXIS: Mark[] = [
  [682, "100", "#111", true], [688, "94,885", "#111", true], [719, "60"], [736, "40"], [696, "87,427", "#111", true], [706, "80", "#111", true],
  [728, "50", "#0000b4", true], [753, "20", "#111", true], [769, "0", "#111", true],
];
const WILLY_AXIS: Mark[] = [
  [785, "-3,4197", "#00b400", true], [800, "-25", "#000096", true], [817, "-50", "#000096", true],
  [833, "-75", "#c80000", true], [847, "-100", "#111", true],
];
const AO_AXIS: Mark[] = [
  [860, "2.000"], [874, "1.000"], [879, "364,14", "#111", true], [886, "265,83", "#5fe65f", true], [899, "0", "#0000ff", true], [910, "-1.000"], [928, "-2.000"],
];
const FORCE_AXIS: Mark[] = [[947, "4"], [967, "2"], [976, "0,8039", "#f01414", true], [989, "0,5000", "#111", true]];

const icon = (body: unknown) => html`<svg class="ico" width="20" height="20" viewBox="0 0 20 20" fill="none" aria-hidden="true">${body}</svg>`;
const plus = (x: number, y: number) => svg`<path d="M${x - 2.5} ${y}h5M${x} ${y - 2.5}v5" stroke="#0000e6" stroke-width="1.3" />`;
const oval = (c: string) => icon(svg`<ellipse cx="10" cy="10.5" rx="6.5" ry="5" fill=${c} fill-opacity=".2" stroke=${c} stroke-width="1.3" />${plus(3, 15)}${plus(17, 5)}`);
const slant = (c: string, w = 1.5) => icon(svg`<path d="M1 18L19 2" stroke=${c} stroke-width=${w} />`);
const flat = (c: string, w = 1.5) => icon(svg`<path d="M1 10h18" stroke=${c} stroke-width=${w} />`);
const bell = svg`<path d="M10 4c-3.4 0-4 3-4.200 6.500L3.500 14.500h13L14.200 10.500C14 7 13.400 4 10 4z" fill="#ffe600" stroke="#8c7800" /><circle cx="10" cy="16" r="1.600" fill="#c8a000" />`;
const lens = (x: number, y: number) => svg`<circle cx=${x} cy=${y} r="4.500" fill="#c8dce6" stroke="#222" stroke-width="1.200" /><path d="M${x + 3.5} ${y + 3.5}l5 5.500" stroke="#000" stroke-width="2.400" />`;
const pen = svg`<path d="M10 15l1-4 6-7 3 2-6 7z" fill="#ffe619" stroke="#7d6400" stroke-width=".8" />`;

const TOOLS: [string, unknown][] = [
  ["Cursor", icon(svg`<path d="M7 3v12l3-2.500 2 4.500 2-1-2-4.500h4z" fill="#e6e6e6" stroke="#555" />`)],
  ["Lupa", icon(lens(9, 8))],
  ["Zoom de zona", icon(svg`<path d="M2 7h11v9H2z" stroke="#3c64dc" stroke-dasharray="2 1" />${lens(11, 7)}`)],
  ["Alerta en línea", icon(svg`<path d="M1 4h15" stroke="#000" stroke-width="1.500" /><g transform="translate(-2 1)">${bell}</g><path d="M12 2l6 5M18 2l-5 5" stroke="#1e1ee6" stroke-width="1.500" /><path d="M14 7v9l2-2 1.500 3 1-1-1-3h2z" fill="#fff" stroke="#555" stroke-width=".7" />`)],
  ["Alerta", icon(svg`${bell}<path d="M3 4q-2 3 0 6M17 4q2 3 0 6" stroke="#555" />`)],
  ["Extensión Fibonacci", icon(svg`<path d="M3 15L6 4l3 11h5" stroke="#111" stroke-width="1.300" /><path d="M7 9h11" stroke="#f08264" stroke-dasharray="1 1" stroke-width="1.500" />${plus(3, 12)}${plus(6, 4)}<path d="M15 17v-6h4M15 14h3M8 15h6" stroke="#0000e6" stroke-width="1.500" />`)],
  ["Retroceso Fibonacci", icon(svg`<path d="M4 8h14M4 10h10" stroke="#f08264" stroke-dasharray="3 1" /><path d="M4 11h10" stroke="#3c64ff" stroke-dasharray="3 1" stroke-width="1.500" /><path d="M15 17v-6h4M15 14h3" stroke="#0000e6" stroke-width="1.500" />`)],
  ["Rectángulo azul", icon(svg`<path d="M4 5h12v10H4z" stroke="#5a8cf0" />${plus(3, 15)}${plus(16, 5)}`)],
  ["Rectángulo rojo", icon(svg`<path d="M4 5h12v10H4z" fill="#e0969a" fill-opacity=".5" stroke="#ff1414" stroke-width="1.500" />${plus(3, 15)}${plus(16, 5)}`)],
  ["Flecha", icon(svg`<circle cx="5" cy="15" r="2" stroke="#111" /><path d="M6.500 13.500L15 5" stroke="#000" stroke-width="2" /><path d="M10 3h8v8z" fill="#000" />`)],
  ["Texto", icon(svg`<path d="M3 3h14v14H3z" fill="#b4d2fa" stroke="#5a8cf0" /><path d="M6 6.500h8M10 6.500V14M8 14h4M6.500 6v2.500M13.500 6v2.500" stroke="#111" stroke-width="1.500" />`)],
  ["Nota", icon(svg`<path d="M10 2.500c9 0 9 13 4 13l1 3-4-2.500C1 17-1 3 10 2.500z" fill="#b4d2fa" stroke="#5a8cf0" /><path d="M6 6.500h8M10 6.500V13M8.500 13h3M6.500 6v2.500M13.500 6v2.500" stroke="#0a780a" stroke-width="1.500" />`)],
  ["Segmento", icon(svg`<circle cx="5" cy="15" r="2" stroke="#111" /><circle cx="15" cy="5" r="2" stroke="#111" /><path d="M6.500 13.500l7-7" stroke="#111" stroke-width="1.500" />`)],
  ["Semirrecta verde", icon(svg`<circle cx="8" cy="10" r="1.700" stroke="#28b428" /><path d="M10 10h9" stroke="#28b428" stroke-width="2" />`)],
  ["Semirrecta roja", icon(svg`<circle cx="8" cy="10" r="1.700" stroke="#ff1414" /><path d="M10 10h9" stroke="#ff1414" stroke-width="2" />`)],
  ["Regla", icon(svg`<path d="M2 14L14 3l4 4L7 18z" fill="#aab9c3" stroke="#46555f" /><path d="M6 11l3 3M9 8l3 3M12 5l3 3" stroke="#46555f" />`)],
  ["Canal", icon(svg`<path d="M1 2h18v6H1z" fill="#82be96" fill-opacity=".6" /><path d="M1 2h18" stroke="#46aa46" stroke-dasharray="2 1" /><path d="M1 18h18M1 15h18" stroke="#e68282" stroke-dasharray="2 1" /><path d="M2 15l4-6 3 4 4-7 3 4 3-5" stroke="#96aaff" stroke-width="1.300" />`)],
  ["Elipse roja", oval("#ff1e1e")], ["Elipse marrón", oval("#96500a")], ["Elipse verde", oval("#0f8c1e")], ["Elipse lima", oval("#1eff1e")],
  ["Recta negra", slant("#111", 1.2)], ["Recta verde", slant("#28b428")], ["Recta roja", slant("#ff0a0a", 1.8)],
  ["Horizontal negra", flat("#111", 1.2)], ["Horizontal salmón", flat("#ff8c78")], ["Horizontal lima", flat("#00ff00", 1.8)],
  ["Horizontal verde", flat("#0a8214", 1.8)], ["Horizontal roja", flat("#ff0000", 1.8)], ["Horizontal azul", flat("#5a96ff", 1.8)],
  ["Horizontal marina", flat("#0000aa", 1.8)],
  ["Vertical", icon(svg`<path d="M10 1v18" stroke="#111" stroke-width="1.300" />`)],
  ["Ángulo", icon(svg`<path d="M19 15H2L15 4" stroke="#f05a5a" stroke-width="1.300" /><path d="M9 10q3 1 2 5M9 13V9h3" stroke="#0000e6" stroke-width="1.500" /><circle cx="16" cy="9" r="2" stroke="#0000e6" />`)],
  ["Ciclo", icon(svg`<circle cx="10" cy="10" r="6" stroke="#f0965a" stroke-width="1.400" />${plus(9, 11)}${plus(15, 6)}`)],
  ["Impulso", icon(svg`<path d="M1 9l4 5 3-8 4 8 4-12" stroke="#f0f5ff" stroke-dasharray="2 1" />${plus(3, 8)}${plus(6, 15)}${plus(9, 6)}${plus(13, 14)}${plus(17, 4)}`)],
  ["Corrección", icon(svg`<path d="M2 14L10 5l6 9" stroke="#f0f5ff" stroke-dasharray="2 1" />${plus(3, 13)}${plus(11, 5)}${plus(16, 15)}<circle cx="16" cy="6" r="2" stroke="#0000e6" />`)],
  ["Confirmar", icon(svg`<path d="M2 10l3-2 3 4 8-9 2 2L8 18z" fill="#4bdc4b" stroke="#1e961e" />`)],
  ["Me gusta", icon(svg`<path d="M2 9h4v9H2zM6 10l4-3 1-5q3 0 2 5h5v9q-6 3-12 1z" fill="#4bdc4b" stroke="#1e961e" />`)],
  ["Cancelar", icon(svg`<path d="M3 5l3-3 4 4 4-4 3 3-4 5 4 5-3 3-4-4-4 4-3-3 4-5z" fill="#ff1e0a" stroke="#a00" />`)],
  ["Aviso", icon(svg`<path d="M10 2l8 15H2z" fill="#ffb432" stroke="#d27800" stroke-linejoin="round" /><path d="M10 7v5M10 14v1.800" stroke="#111" stroke-width="2" />`)],
  ["Subir", icon(svg`<path d="M10 3l6 7h-3v7H7v-7H4z" fill="#28aa28" stroke="#0a780a" />`)],
];

const chevron = html`<svg class="chev" width="8" height="6" viewBox="0 0 8 6" fill="none" aria-hidden="true"><path d="M1 1.500l3 3 3-3" stroke="#111" stroke-width="1.500" /></svg>`;
const arrow = (d: string) => html`<svg width="6" height="8" viewBox="0 0 6 8" fill="none" aria-hidden="true"><path d=${d} stroke="#111" stroke-width="1.500" /></svg>`;

@customElement("app-root")
export class AppRoot extends LitElement {
  static styles = css`
    :host { display: block; font-family: "Liberation Sans", Arial, sans-serif; font-size: 10px; font-weight: bold; color: #10181c; }
    .app { display: grid; grid-template: 23px minmax(0, 1fr) 20px / 28px minmax(0, 1fr); height: 100vh; min-height: 600px; background: #fff; }
    button, select, input { font: inherit; color: inherit; margin: 0; padding: 0; background: none; border: 0; appearance: none; outline: none; }
    button { display: flex; align-items: center; justify-content: center; }

    .top { grid-column: 1 / 3; box-sizing: border-box; display: flex; align-items: stretch; border-top: 1px solid #4c6475; border-bottom: 1px solid #4c6475; background: linear-gradient(#bdd6e2, #9ebccb); }
    .grp { display: flex; align-items: center; box-sizing: border-box; border-right: 1px solid #6b8594; gap: 3px; padding: 0 3px; }
    .g-logo { width: 23px; padding: 0 1px; } .g-grip { width: 16px; padding: 0 2px; } .g-name { width: 58px; }
    .g-tf { width: 215px; justify-content: space-between; } .g-day { width: 43px; } .g-ku { width: 92px; justify-content: space-between; }
    .g-units { width: 85px; } .g-ind { width: 85px; padding-left: 5px; } .g-more { width: 14px; padding: 0; justify-content: center; }
    .g-info { flex: 1; gap: 4px; padding-left: 7px; }
    .g-sync { width: 20px; padding: 0; justify-content: center; } .g-win { border: 0; width: 47px; justify-content: space-around; }
    .pick { display: flex; align-items: center; justify-content: space-between; flex: 1; white-space: nowrap; position: relative; }
    .pick select { width: 100%; height: 16px; }
    .pick .chev { position: absolute; right: 0; top: 6px; pointer-events: none; }
    .tf { height: 17px; box-sizing: border-box; border: 1px solid #7390a0; border-radius: 3px; padding: 0 1px; background: linear-gradient(#bcd3df, #a6c2d0); }
    .tf.on { background: #8ba3b3; }
    .pct { background: #4ddf50; color: #fff; border: 1px solid #2fb43a; border-radius: 2px; padding: 0 2px; line-height: 12px; font-weight: normal; }
    .name { background: #c6dcae; border: 1px solid #aeb982; border-radius: 3px; padding: 0 2px; line-height: 12px; font-weight: normal; white-space: nowrap; }
    .date { white-space: nowrap; }
    .g-info .fill { flex: 1; }
    .g-info { padding-right: 0; }

    .side { box-sizing: border-box; display: flex; flex-direction: column; min-height: 0; border-left: 1px solid #5b7383; border-right: 1px solid #6b8594; background: #9cb9c7; }
    .side button { flex: none; width: 26px; }
    .fold { height: 11px; border-bottom: 1px solid #86a2b0; box-sizing: border-box; }
    .tools { flex: 1; min-height: 0; overflow: hidden; display: flex; flex-direction: column; padding-top: 1px; }
    .tool { height: 22px; }
    .tool.on { background: #8fa5b1; border: 1px solid #6b8594; border-radius: 3px; box-sizing: border-box; }
    .down { height: 11px; border-top: 1px solid #6b8594; border-bottom: 1px solid #6b8594; box-sizing: border-box; background: linear-gradient(#bdd6e2, #9ebccb); }
    .conf { height: 31px; } .dots { height: 25px; }

    .stage { display: grid; grid-template-rows: minmax(0, 653fr) minmax(0, 99fr) minmax(0, 79fr) minmax(0, 84fr) minmax(0, 57fr) minmax(0, 16fr); min-height: 0; }
    .panel { display: grid; grid-template: minmax(0, 1fr) / minmax(0, 1fr) 43px; min-height: 0; }
    .panel > svg { width: 100%; height: 100%; display: block; overflow: hidden; }
    .plot { grid-area: 1 / 1; } .axis { grid-area: 1 / 2; }
    .title, .chips { grid-area: 1 / 1; align-self: start; justify-self: start; z-index: 1; display: flex; align-items: stretch; height: 15px; box-sizing: border-box; background: #cddbe2; border: 1px solid #75909e; border-left: 0; white-space: nowrap; }
    .title { align-items: center; gap: 4px; padding: 0 2px 0 3px; height: 16px; margin: 0; font-size: 10px; }
    .chip { display: flex; align-items: center; gap: 3px; padding: 0 2px; border-right: 1px solid #75909e; }
    .chip:last-child { border-right: 0; }
    .sq { width: 8px; height: 8px; background: #75899a; display: inline-block; }
    .sq.black { background: #000; }
    .sq.half { background: linear-gradient(90deg, #75899a 50%, #000 50%); }
    .sq.half2 { background: linear-gradient(90deg, #000 50%, #75899a 50%); }
    .sq.multi { background: repeating-linear-gradient(90deg, #000 0 2px, #2fb8f5 2px 4px, #1ee61e 4px 6px, #e6e600 6px 8px); }
    .box { width: 8px; height: 8px; box-sizing: border-box; border: 1px solid #6b7d88; background: #e0e8ec; }

    .t { font-size: 10px; font-weight: bold; }
    .ax { font-size: 9px; }
    .badge { text-anchor: middle; font-weight: normal; }
    .big { font-size: 24px; fill: #000; }
    .foot { font-size: 10px; font-weight: normal; fill: #111; }
    .mid { text-anchor: middle; }

    .bottom { grid-column: 1 / 3; box-sizing: border-box; display: flex; align-items: stretch; background: #9cb9c7; border-top: 1px solid #5b7383; border-left: 1px solid #5b7383; }
    .edit { width: 27px; background: #8fa5b1; border-right: 1px solid #6b8594; }
    .share { display: flex; gap: 1px; } .share button { width: 20px; }
    .share .back { width: 14px; font-size: 14px; font-weight: normal; }
    .scroll { flex: 1; display: grid; grid-template-columns: 12px minmax(0, 1fr) 12px; margin: 3px 0 3px 2px; border: 1px solid #6b8594; box-sizing: border-box; }
    .scroll button { background: linear-gradient(#bdd6e2, #9ebccb); }
    .track { width: 100%; height: 100%; border: solid #6b8594; border-width: 0 1px; box-sizing: border-box; }
    .track::-webkit-slider-thumb { appearance: none; width: 45px; height: 12px; border-left: 1px solid #6b8594; border-right: 1px solid #6b8594; background: linear-gradient(#bdd6e2, #9ebccb); }
    .zoom { display: flex; align-items: center; justify-content: flex-start; width: 154px; box-sizing: border-box; padding-left: 4px; overflow: hidden; }
    .zoom button { flex: none; width: 22px; }
    .ico { display: block; flex: none; }
  `;

  private panel(y: number, h: number, plot: unknown, marks: Mark[], head: unknown) {
    return html`<section class="panel">
      <svg class="plot" viewBox="28 ${y} 1847 ${h}" preserveAspectRatio="none">${plot}<rect x="28" y=${y} width="1847" height="1" fill="#75909e" /></svg>
      <svg class="axis" viewBox="1875 ${y} 43 ${h}" preserveAspectRatio="none">
        <rect x="1875" y=${y} width="1" height=${h} fill="#75909e" /><rect x="1875" y=${y} width="43" height="1" fill="#75909e" />${axis(marks)}
      </svg>
      ${head}
    </section>`;
  }

  private pick(name: string, value: string) {
    return html`<label class="pick"><select aria-label=${name}><option>${value}</option></select>${chevron}</label>`;
  }

  render() {
    const title = (t: string, k: string) => html`<h2 class="title"><span class="sq ${k}"></span>${t}</h2>`;
    return html`<div class="app">
      <header class="top">
        <div class="grp g-logo">${icon(svg`<path d="M4.500 8v9M10.500 5v11M16.500 2v10" stroke="#1e5a1e" /><path d="M3 10h3v5H3zM9 7h3v6H9zM15 4h3v6h-3z" fill="#28a028" />`)}</div>
        <div class="grp g-grip"><svg width="10" height="16" viewBox="0 0 10 16" fill="none"><path d="M1 1h3v5H1zM6 1h3v5H6zM1 9h3v5H1zM6 9h3v5H6z" stroke="#5f7886" /></svg></div>
        <div class="grp g-name">${this.pick("Valor", "NASDAQ")}</div>
        <div class="grp g-tf">${["144s", "1m", "12m", "56m", "1h", "4h", "D", "W", "M", "Q"].map((t) => html`<button class="tf ${t === "D" ? "on" : ""}">${t}</button>`)}</div>
        <div class="grp g-day">${this.pick("Periodo", "1 día")}</div>
        <div class="grp g-ku">${["5kU", "10kU", "35kU"].map((t) => html`<button class="tf ${t === "10kU" ? "on" : ""}">${t}</button>`)}</div>
        <div class="grp g-units">${this.pick("Unidades", "10 k unidades")}</div>
        <div class="grp g-ind"><button>${icon(svg`<path d="M2 8q4-8 8 0t8-3" stroke="#e63c3c" stroke-width="1.500" /><path d="M2 5q4 8 8 2t8 4" stroke="#28a028" stroke-width="1.300" /><path d="M2 13h16v5H2z" fill="#14c814" /><path d="M4 13h3v3H4zM12 13h3v3h-3z" fill="#e61e1e" />`)}Indicadores</button></div>
        <div class="grp g-more"><button aria-label="Más indicadores">${chevron}</button></div>
        <div class="grp g-info">
          <svg width="10" height="11" viewBox="0 0 10 11"><rect width="10" height="11" fill="#f2f2f2" stroke="#8c9aa2" /><path d="M5 2v1.500M5 5v4M3.500 9h3" stroke="#8c9aa2" stroke-width="1.500" /></svg>
          <svg width="12" height="12" viewBox="0 0 12 12"><circle cx="6" cy="6" r="4" fill="#8c8c8c" stroke="#a8b4ba" /></svg>
          <span class="pct">+0,71 %</span><span class="date">24 oct 2025</span><span class="name">EEUU Tech 100 Cash (1€)</span>
        </div>
        <div class="grp g-sync"><button aria-label="Sincronizar"><svg width="16" height="16" viewBox="0 0 16 16" fill="none"><path d="M9 2Q2 2 3 9" stroke="#f03c3c" stroke-width="2" /><path d="M0 8h7L4 13z" fill="#f03c3c" /><path d="M7 14q7 0 6-7" stroke="#14b428" stroke-width="2" /><path d="M9 8h7l-3-5z" fill="#14b428" /></svg></button></div>
        <div class="grp g-win">
          <button aria-label="Minimizar"><svg width="10" height="10" viewBox="0 0 10 10"><path d="M1 8.500h8" stroke="#7b8d97" stroke-width="2" /></svg></button>
          <button aria-label="Restaurar"><svg width="10" height="10" viewBox="0 0 10 10" fill="none"><path d="M1 4h5v5H1zM3.500 3.500V1.500h5v5H6.500" stroke="#7b8d97" stroke-width="1.300" /></svg></button>
          <button aria-label="Cerrar"><svg width="10" height="10" viewBox="0 0 10 10"><path d="M1 1l8 8M9 1L1 9" stroke="#7b8d97" stroke-width="1.700" /></svg></button>
        </div>
      </header>

      <nav class="side" aria-label="Herramientas">
        <button class="fold" aria-label="Plegar"><svg width="8" height="5" viewBox="0 0 8 5" fill="none"><path d="M1 4l3-3 3 3" stroke="#6b7d88" /></svg></button>
        <div class="tools">${TOOLS.map(([n, i], k) => html`<button class="tool ${k === 0 ? "on" : ""}" aria-label=${n}>${i}</button>`)}
          <button class="tool" aria-label="Bajar">${icon(svg`<path d="M7 4h6v6H7z" fill="#f01e1e" />`)}</button></div>
        <button class="down" aria-label="Más">${chevron}</button>
        <button class="conf" aria-label="Configurar">${icon(svg`<path d="M5 6h9l3 3v9H7z" fill="#f0f0f0" stroke="#6b7d88" /><path d="M9 13l3-3 3 4" stroke="#28a028" /><path d="M12 10l5 6 2-1" stroke="#555" stroke-width="2" /><circle cx="5" cy="5" r="4.500" fill="#0a7a1e" /><path d="M4 4l1.500-1v5" stroke="#fff" stroke-width="1.200" />`)}</button>
        <button class="dots" aria-label="Más opciones">${icon(svg`<circle cx="3" cy="8" r="1.500" fill="#333" /><circle cx="9" cy="8" r="1.500" fill="#333" /><circle cx="15" cy="8" r="1.500" fill="#333" /><path d="M12 12h6l-3 3.500z" fill="#111" />`)}</button>
      </nav>

      <main class="stage">
        ${this.panel(23, 653, mainPlot(), MAIN_AXIS, html`<div class="chips">
          <span class="chip"><svg width="25" height="11" viewBox="0 0 25 11"><rect x=".5" y=".5" width="10" height="10" fill="#fff" stroke="#8c9aa2" /><path d="M5.500 2v3M2.500 5h6l-3 4z" fill="#f01e1e" stroke="#f01e1e" /><rect x="14.500" y=".5" width="10" height="10" fill="#fff" stroke="#8c9aa2" /><path d="M19.500 9V6M16.500 6h6l-3-4z" fill="#14a01e" stroke="#14a01e" /></svg></span>
          <label class="chip"><input class="box" type="checkbox" />Precio</label>
          <span class="chip"><svg width="10" height="10" viewBox="0 0 10 10"><path d="M0 1.500h2M0 5h2M0 8.500h2M3 1.500h7M3 5h7M3 8.500h7" stroke="#222" stroke-width="1.300" /></svg></span>
          <label class="chip"><input class="box" type="checkbox" />Cierre (W)</label>
          <span class="chip"><span class="sq"></span>Tunel Domenec v4 (t t t t t)</span>
          <span class="chip"><span class="sq multi"></span>Control Total Doc v.6</span>
          <span class="chip"><span class="sq black"></span>Multi Avisos (3 f 3 1,5 70 f f)</span>
        </div>`)}
        ${this.panel(676, 99, trainPlot(), TRAIN_AXIS, title("Sistema de trenes Doc v4 (f f)", "half"))}
        ${this.panel(775, 79, willyPlot(), WILLY_AXIS, title("Willy Doc (t)", ""))}
        ${this.panel(854, 84, awesomePlot(), AO_AXIS, title("Awesome Evolution Doc", ""))}
        ${this.panel(938, 57, forcePlot(), FORCE_AXIS, title("Barra Fuerza Fondo Mercado v4 (f)", "half2"))}
        ${this.panel(995, 16, DATES.map(([x, t]) => svg`<rect x=${x} y="996" width="1" height="3" fill="#75909e" />${t ? svg`<text class="t mid" x=${x} y="1008">${t}</text>` : null}`), [], null)}
      </main>

      <footer class="bottom">
        <button class="edit" aria-label="Dibujar">${icon(svg`<path d="M3 3l3 14 3-13 3 13" stroke="#c83232" /><path d="M2 13h8" stroke="#28a028" />${pen}`)}</button>
        <div class="share">
          <button aria-label="Compartir">${icon(svg`<path d="M14 4L5 9l8 6" stroke="#f5f5f5" stroke-width="1.500" /><circle cx="14" cy="4" r="2.500" fill="#fff" /><circle cx="5" cy="9" r="2.500" fill="#fff" /><circle cx="12" cy="14" r="2.500" fill="#fff" /><path d="M13 14h6l-3 4z" fill="#111" />`)}</button>
          <button aria-label="Chat">${icon(svg`<path d="M3 2h10v9H7l-3 3v-3H3z" fill="#78a5f5" stroke="#3c6ed2" /><path d="M7 7h11v8h-2v3l-3-3H7z" fill="#3c78e6" stroke="#1e50be" /><path d="M9 11h1.500M12 11h1.500M15 11h1.500" stroke="#fff" stroke-width="1.500" />`)}</button>
          <button aria-label="Informe">${icon(svg`<path d="M5 2h11v16H5z" fill="#fff" stroke="#444" /><path d="M7 5h4M7 8h7M7 14h3" stroke="#555" /><path d="M12 4h4v3h-4z" fill="#e62828" /><path d="M12 12l4 4M16 12v4h-4" stroke="#28a028" stroke-width="1.500" />`)}</button>
          <button aria-label="Órdenes">${icon(svg`<path d="M2 3h9v3H2zM4 10h8v2H4zM2 14h7v3H2z" fill="#1eaa32" /><path d="M9 3h5v3H9zM7 7h11v3H7zM9 13h8v2H9z" fill="#e63232" /><path d="M10 1v17" stroke="#444" />`)}</button>
          <button aria-label="Ventanas">${icon(svg`<rect x="2" y="2" width="11" height="9" fill="#fff" stroke="#2864d2" stroke-width="1.500" /><rect x="5" y="5" width="13" height="12" fill="#fff" stroke="#2864d2" stroke-width="1.500" /><path d="M7 13l3-4 3 4 3-5" stroke="#28a028" stroke-width="1.500" />`)}</button>
          <button class="back" aria-label="Retroceder">«</button>
        </div>
        <div class="scroll">
          <button aria-label="Izquierda">${arrow("M4.500 1l-3 3 3 3")}</button>
          <input class="track" type="range" min="0" max="100" value="98" aria-label="Desplazamiento" />
          <button aria-label="Derecha">${arrow("M1.500 1l3 3-3 3")}</button>
        </div>
        <div class="zoom">
          <button aria-label="Deshacer">${icon(svg`<path d="M6 8h5q7 1 3 8" stroke="#1e78e6" stroke-width="2.500" /><path d="M1 8l7-5v10z" fill="#1e78e6" />`)}</button>
          <button aria-label="Rehacer">${icon(svg`<path d="M14 8H9q-7 1-3 8" stroke="#7db4dc" stroke-width="2.500" /><path d="M19 8l-7-5v10z" fill="#7db4dc" />`)}</button>
          <button aria-label="Ajustes de zoom">${icon(svg`<path d="M11 4h3v11h-3z" fill="#e62828" /><path d="M15 2h3v12h-3z" fill="#28b428" stroke="#0a780a" /><path d="M3 17l5-6q0-5 4-5l-1 3 2 1 2-2q0 4-5 4l-5 6z" fill="#fff" stroke="#333" />`)}</button>
          <button aria-label="Ajustar">${icon(svg`${lens(8, 7)}<path d="M18 2v9M16 4l2-2 2 2M16 9l2 2 2-2M1 17h9M3 15l-2 2 2 2M8 15l2 2-2 2" stroke="#1e3ce6" stroke-width="1.200" />`)}</button>
          <button aria-label="Alejar">${icon(svg`<circle cx="7" cy="7" r="5" fill="#fff" stroke="#333" /><path d="M11 11l6 6" stroke="#000" stroke-width="2.500" /><path d="M4.500 7h5" stroke="#1e1ee6" stroke-width="1.500" />`)}</button>
          <button aria-label="Acercar">${icon(svg`<circle cx="7" cy="7" r="5" fill="#fff" stroke="#333" /><path d="M11 11l6 6" stroke="#000" stroke-width="2.500" /><path d="M4.500 7h5M7 4.500v5" stroke="#1e1ee6" stroke-width="1.500" />`)}</button>
          <button aria-label="Ocultar">${icon(svg`<path d="M2 4h14v4H2z" fill="#e6e6e6" stroke="#333" stroke-dasharray="2 1" /><path d="M9 9v5" stroke="#1e64e6" stroke-width="2.500" /><path d="M5 13h8l-4 5z" fill="#1e64e6" />`)}</button>
        </div>
      </footer>
    </div>`;
  }
}
